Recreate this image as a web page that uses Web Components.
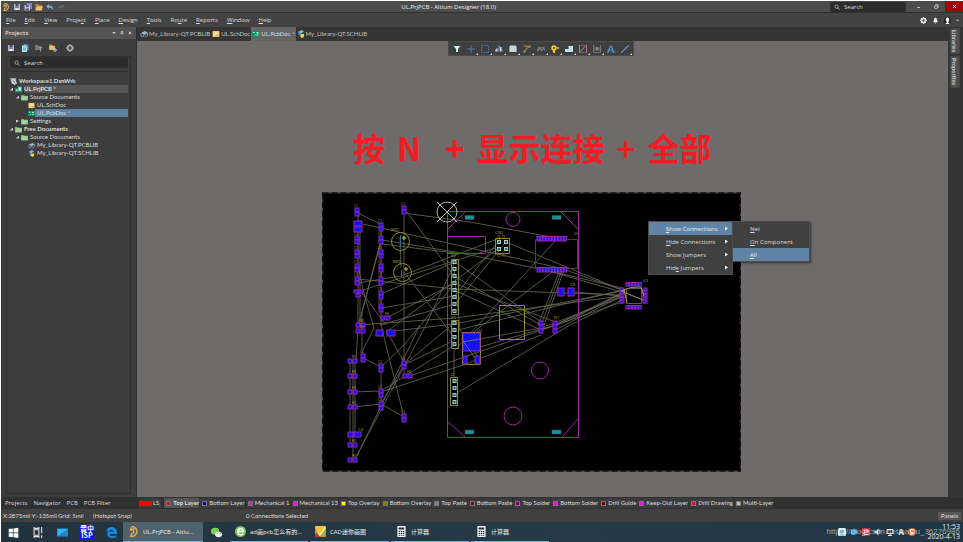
<!DOCTYPE html>
<html lang="en">
<head>
<meta charset="utf-8">
<title>UL.PrjPCB - Altium Designer (18.0)</title>
<style>
html,body{margin:0;height:100%}
body{background:#fff;padding:1px 0 0 1px;box-sizing:border-box;overflow:hidden;
--narrow:Lato,"Open Sans",sans-serif;
font:6px/8px "Open Sans","Noto Sans CJK SC",sans-serif;color:#dedede}
</style>
</head>
<body>
<eda-app></eda-app>
<script>
const define=(name,render)=>customElements.define(name,class extends HTMLElement{
  constructor(){super();this.attachShadow({mode:'open'})}
  connectedCallback(){
    const t=document.createElement('template');
    t.innerHTML='<style>*{box-sizing:border-box}button{font:inherit;color:inherit;background:none;border:0;padding:0;margin:0;white-space:pre}u{text-decoration-thickness:1px;text-underline-offset:1px}</style>'+render(this);
    this.shadowRoot.replaceChildren(t.content.cloneNode(true));
  }
});

const floppy=c=>`<path fill="${c}" d="M2 2h12v12H2z"/><path fill="#4b4b68" d="M5 2h6v5H5zM4 9h8v1H4z"/><path fill="#fff" d="M5 11h6v3H5z"/>`;
const folder='<path fill="#79a875" d="M0 2h7l1 2h8v11H0z"/><path fill="#a5d19b" d="M1 5h14v9H1z"/>';
const yfold='<path fill="#b98b43" d="M1 2h5l1 2h7v10H1z"/><path fill="#edc477" d="M4 7h12l-3 8H1z"/>';
const calc='<path fill="#f3f3f3" d="M2 0h12v16H2z"/><path fill="#26353e" d="M4 2h8v3H4zM4 7h2v2H4zm3 0h2v2H7zm3 0h2v2h-2zM4 10h2v2H4zm3 0h2v2H7zm3 0h2v2h-2zM4 13h2v1H4zm3 0h2v1H7zm3 0h2v1h-2z"/>';
const icons={
altium:'<path fill="none" stroke="#d9ad55" stroke-width="2.2" d="M5 1h3q5 3 5 7t-5 7H4l2-5M4 2v4l4-2v7"/>',
save:floppy('#b7b5dc'),
saveall:'<path fill="#8882c0" d="M5 0h11v12H5z"/><path fill="#bbb9e2" d="M1 4h11v11H1z"/><path fill="#55548a" d="M4 4h5v4H4zM3 11h7v4H3z"/>',
open:yfold,
undo:'<path fill="#76a6d6" d="M6 2v3q8 0 9 9-3-5-9-5v3L0 7z"/>',
redo:'<path fill="#646464" d="M10 2v3q-8 0-9 9 3-5 9-5v3l6-5z"/>',
search:'<circle cx="7" cy="7" r="4.5" fill="none" stroke="#ddd" stroke-width="1.5"/><path stroke="#ddd" stroke-width="1.7" d="m10 10 5 5"/>',
min:'<path fill="#ddd" d="M4 10h9v3H4z"/>',
restore:'<path fill="none" stroke="#ddd" stroke-width="2" d="M5 5V2h9v8h-3M2 6h9v8H2z"/>',
close:'<path stroke="#eee" stroke-width="3" d="m3 3 10 10M13 3 3 13"/>',
gear:'<circle cx="8" cy="8" r="4.5" fill="none" stroke="#eee" stroke-width="3.5"/><path stroke="#eee" stroke-width="2.5" d="M8 0v3M8 13v3M0 8h3M13 8h3M2.5 2.5l2 2M11.5 11.5l2 2M2.5 13.5l2-2M11.5 4.5l2-2"/>',
bell:'<path fill="#eee" d="M2 12q3-3 3-8 3-5 6 0 0 5 3 8zM6 13h4q-2 4-4 0z"/>',
user:'<circle cx="8" cy="8" r="8" fill="#242424"/><ellipse cx="8" cy="6" rx="4" ry="5" fill="#fff"/><path fill="#fff" d="M6 10h4v3l3 3H3l3-3z"/>',
down:'<path fill="#ddd" d="M1 4h14l-7 8z"/>',
pin:'<path stroke="#ddd" stroke-width="2.5" d="M4 2h8M5 2v7M11 2v7M2 9h12M8 9v6"/>',
lib:'<path fill="#9db5cb" d="M2 6 10 2l5 3-7 5z"/><path fill="none" stroke="#8495a6" stroke-width="2" d="M2 6v6l4 2 2-4 7-4v5l-5 3"/>',
sch:'<path fill="#d9ae52" d="M1 2h14v12H1z"/><path fill="#f5dc96" d="M2 3h12v10H2z"/><path stroke="#bd8b3c" d="M8 10h5M8 11.5h5"/>',
pcb:'<path fill="#099261" d="M0 2h16v12H0z"/><path fill="#d9f1dd" d="M9 4h4v3H9zM9 9h4v2H9zM2 4h3v2H2zM5 9h2v2H5z"/>',
slib:'<path fill="#75bce6" d="M2 4 9 0l5 3-7 5z"/><path fill="#f2d737" d="M7 8h7v3q0 5-5 5l-3-4z"/><path fill="#3b78b0" d="m2 4 5 4v4l-5-3z"/>',
docs:'<path fill="#5793bb" d="M5 0h7l3 3v10H5z"/><path fill="#b4dbef" d="M2 3h7l3 3v10H2z"/><path stroke="#4384ad" d="M4 8h6M4 10h6M4 12h6"/>',
gfold:'<path fill="#777" d="M0 2h6l1 2h5v8H0z"/><path fill="#999" d="M8 6h7l-3 4v5h-2v-5z"/>',
yfgear:'<path fill="#b98b43" d="M0 1h6l1 2h5v9H0z"/><path fill="#edc477" d="M1 4h10v7H1z"/><circle cx="12" cy="12" r="2.5" fill="none" stroke="#ccc" stroke-width="2"/>',
dial:'<circle cx="8" cy="8" r="5" fill="none" stroke="#aeb5ba" stroke-width="3"/><path stroke="#aeb5ba" stroke-width="2" d="M8 0v3M8 13v3M0 8h3M13 8h3"/>',
workspace:'<path fill="#8ba5ca" d="M0 0h14v13H4z"/><path fill="#e2edf9" d="m3 4 7-1 6 9-6 4-5-5z"/><path stroke="#345c94" stroke-width="1.5" d="m5 6 7 7M8 5l4 7"/>',
prj:'<path fill="#18966c" d="M0 5h9v10H0zM6 0h10v14H6z"/><path fill="#d7eee4" d="M8 3h6v8H8zM2 8h4v3H2z"/>',
folder,
filter:'<path fill="#c8edf4" d="M1 2h14L10 8v6H6V8z"/>',
plus:'<path stroke="#5d83ba" stroke-width="1.7" d="M8 0v16M0 8h16"/>',
marquee:'<path fill="none" stroke="#607fc5" stroke-width="1.5" stroke-dasharray="3 2" d="M1 1h14v14H1z"/>',
align:'<path fill="#c8dce5" d="M2 7h3v6H2zM10 4h3v9h-3z"/><path fill="#d84d4b" d="M5 6h2v7H5z"/><path fill="#79b6e4" d="M7 1h2v12H7zM0 9h2v4H0zM13 8h2v5h-2z"/>',
chip:'<path fill="#8c9da4" d="M0 3h2v11H0zM14 3h2v11h-2z"/><path fill="#c6d6d8" d="M2 1h12v13H2z"/>',
route:'<path fill="none" stroke="#b18b38" stroke-width="2" d="M1 2h8L5 12H1m8-5 4-4"/><circle cx="13" cy="3" r="2.5" fill="#b18b38"/><circle cx="3" cy="13" r="2.5" fill="#758899"/>',
wave:'<path fill="none" stroke="#9a743e" stroke-width="2" d="M0 13 3 4l4 7 3-7 4 4"/><path fill="none" stroke="#648fba" stroke-width="1.5" d="m2 13 4-9 4 8 4-8 2 9"/>',
via:'<circle cx="6" cy="6" r="5.5" fill="#f1cc20"/><circle cx="6" cy="6" r="2" fill="#57471e"/><path fill="#f1cc20" d="M4 10h4v6H4z"/><path fill="#84bd5d" d="M11 4h5v4h-5z"/>',
poly:'<path fill="#c2e1eb" d="M0 8h7V2h9v12H0z"/>',
rect:'<path fill="none" stroke="#bd6fab" stroke-width="1.8" d="M1 0h14v16H1z"/><path stroke="#c0a052" stroke-width="1.7" d="m3 13 9-10"/>',
dim:'<path fill="none" stroke="#7c8aa0" stroke-width="1.5" d="M1 0v15h14V0M4 4v8m8-8v8M4 8h8"/><path fill="#9e8449" d="M6 4h4v7H6z"/>',
letter:'<path fill="none" stroke="#5a95cf" stroke-width="2.4" d="M2 14 7 2h2l4 12M4 10h7M0 14h5m5 0h6"/>',
line:'<path stroke="#5c95d3" stroke-width="2.3" d="M1 15 15 1"/>',
win:'<path fill="#fff" d="m1 3 6-1v6H1zm7-1 7-1v7H8zM1 9h6v6l-6-1zm7 0h7v7l-7-1z"/>',
task:'<path fill="none" stroke="#e5e5e5" stroke-width="1.5" d="M3 4h7v8H3zM3 0v2h7V0M3 16v-2h7v2M14 0v9m0 3v4"/>',
desktop:'<path fill="#168ad3" d="M0 2h16v12H0z"/><path fill="#36b6f1" d="M1 3h14L1 13z"/>',
edge:'<path fill="#168cdf" d="M0 8q1-8 8-8t8 8v2H5q1 6 10 2v3Q2 19 2 9q1-5 5-5Q2 4 0 8m5-1h6q-1-3-3-3T5 7"/>',
wechat:'<ellipse cx="6" cy="6" rx="6" ry="5" fill="#7dd35a"/><ellipse cx="11" cy="11" rx="5" ry="4" fill="#eee"/><path fill="#315a35" d="M3 4h1v1H3zm5 0h1v1H8zm1 5h1v1H9zm4 0h1v1h-1z"/>',
browser:'<circle cx="8" cy="8" r="8" fill="#79c760"/><path fill="none" stroke="#fff" stroke-width="2" d="M12 11q-4 4-7 0-3-5 2-7 5-1 5 4H4"/>',
cad:'<path fill="#d59828" d="M0 0h16v16H0z"/><path fill="#f0c33a" d="M0 0h16L5 12z"/><path fill="#85b94a" d="M16 0v9L8 16H4z"/><path fill="#c8382e" d="m0 12 4-3 4 7H0z"/><path fill="none" stroke="#f8ed95" stroke-width="2.5" d="m4 9 3 4 8-11"/>',
calc,
bluebox:'<rect width="16" height="16" rx="3" fill="#e8f2fa"/><circle cx="8" cy="7" r="4" fill="#559bc5"/><path fill="#559bc5" d="M3 13h10v2H3z"/>',
drop:'<path fill="#35aaf0" d="M1 7Q6-2 13 4q5 7-4 10Q0 15 1 7"/>',
redbox:'<path fill="#e1222c" d="M0 0h16v16H0z"/><path fill="none" stroke="#fff" stroke-width="2" d="M3 4h9v4H4v5h9"/>',
sound:'<path fill="#ddd" d="M1 6h3l5-5v14l-5-5H1z"/><path fill="none" stroke="#ddd" d="M11 4q4 4 0 8"/>',
net:'<path fill="none" stroke="#eee" stroke-width="2" d="M2 3h12v8H2zM8 11v3M4 15h8"/>',
sogou:'<circle cx="8" cy="8" r="8" fill="#ed5829"/><path fill="none" stroke="#fff" stroke-width="2.2" d="M12 4Q4 1 5 6t5 3q3 4-6 3"/>'
};
define('ui-icon',h=>`<style>:host{display:inline-flex;flex:none;width:var(--icon,8px);height:var(--icon,8px)}svg{width:100%;height:100%}</style><svg viewBox="0 0 16 16" aria-hidden="true">${icons[h.getAttribute('name')]||''}</svg>`);

define('search-box',()=>`<style>:host{display:flex;align-items:center;gap:4px;background:#2b2b2b;border-radius:2px;padding:0 4px;--icon:6px}
input{font:inherit;color:#ddd;background:none;border:0;outline:0;padding:0;min-width:0;width:100%}input::placeholder{color:#ddd;opacity:1}</style><ui-icon name="search"></ui-icon><input aria-label="Search" placeholder="Search">`);

define('title-bar',()=>`<style>:host{display:grid;grid-template-columns:6fr auto 7fr;background:#4c4c4c;height:12px;border-bottom:1px solid #303030;align-items:center}
.l,.r{display:flex;align-items:center}.l{gap:3px;padding-left:1px}.l button,.r button{display:flex;align-items:center;justify-content:center}
.r{justify-content:flex-end;height:11px}search-box{width:76px;height:10px;margin-right:3px}.r button{width:18px;height:11px;--icon:5px}.r .x{background:#9e0808}h1{font:inherit;margin:0;color:#eee}</style>
<div class="l">${['altium','save','saveall','open','undo','redo'].map(n=>`<button aria-label="${n}"><ui-icon name="${n}"></ui-icon></button>`).join('')}</div>
<h1>UL.PrjPCB - Altium Designer (18.0)</h1>
<div class="r"><search-box></search-box><button aria-label="Minimize"><ui-icon name="min"></ui-icon></button><button aria-label="Restore"><ui-icon name="restore"></ui-icon></button><button class="x" aria-label="Close"><ui-icon name="close"></ui-icon></button></div>`);

define('menu-bar',()=>`<style>:host{display:flex;justify-content:space-between;background:#434343;height:14px;align-items:center;padding:0 4px 0 5px}nav,div{display:flex;gap:9px;align-items:center}div{gap:5px;--icon:7px}.d{--icon:3px}button{display:flex}</style>
<nav>${['<u>F</u>ile','<u>E</u>dit','<u>V</u>iew','Proje<u>c</u>t','<u>P</u>lace','<u>D</u>esign','<u>T</u>ools','Ro<u>u</u>te','<u>R</u>eports','<u>W</u>indow','<u>H</u>elp'].map(t=>`<button><span>${t}</span></button>`).join('')}</nav>
<div><button aria-label="Settings"><ui-icon name="gear"></ui-icon></button><button aria-label="Notifications"><ui-icon name="bell"></ui-icon></button><button aria-label="Account"><ui-icon name="user"></ui-icon></button><button class="d" aria-label="Account menu"><ui-icon name="down"></ui-icon></button></div>`);

define('tree-row',h=>`<style>:host{display:flex;align-items:center;height:8px;gap:2px;padding-left:calc(var(--level)*6px);white-space:nowrap;--icon:7px}
:host([strong]){font-weight:700}:host([current]){background:linear-gradient(90deg,transparent 14px,#555 14px)}:host([selected]){background:linear-gradient(90deg,transparent 25px,#5e81a1 25px)}
i{width:3px;height:3px;flex:none}i.open{background:#ddd;clip-path:polygon(100% 0,100% 100%,0 100%)}i.shut{background:#ddd;clip-path:polygon(0 0,100% 50%,0 100%)}</style>
${h.hasAttribute('arrow')?`<i class="${h.getAttribute('arrow')}"></i>`:''}<ui-icon name="${h.getAttribute('icon')}"></ui-icon><slot></slot>`);

define('projects-panel',()=>`<style>:host{display:flex;flex-direction:column;background:#3d3d3d;border-left:1px solid #303030;border-right:1px solid #303030;min-height:0}
header{display:flex;align-items:center;height:12px;background:#545454;padding:0 4px 0 3px;--icon:4px;gap:4px}h2{font:inherit;font-weight:600;margin:0;flex:1}header button{display:flex}
.tools{display:flex;gap:6px;height:17px;align-items:center;padding-left:5px}.tools hr{width:1px;height:8px;border:0;background:#303030;margin:0 -2px}.tools button{display:flex}
.box{flex:1;border:1px solid #2f2f2f;margin:0 5px 3px 4px;padding:0 2px 0 3px}search-box{height:11px}.rule{border-top:1px solid #2f2f2f;margin:3px 0 5px}tree-row{font-family:var(--narrow)}</style>
<header><h2>Projects</h2><button aria-label="Panel menu"><ui-icon name="down"></ui-icon></button><button aria-label="Pin"><ui-icon name="pin"></ui-icon></button><button aria-label="Close"><ui-icon name="close"></ui-icon></button></header>
<div class="tools">${['save','docs','gfold','yfgear'].map(n=>`<button aria-label="${n}"><ui-icon name="${n}"></ui-icon></button>`).join('')}<hr><button aria-label="Options"><ui-icon name="dial"></ui-icon></button></div>
<div class="box"><search-box></search-box><div class="rule"></div>
<tree-row style="--level:0" strong icon="workspace">Workspace1.DsnWrk</tree-row>
<tree-row style="--level:0" strong current arrow="open" icon="prj">UL.PrjPCB *</tree-row>
<tree-row style="--level:1" arrow="open" icon="folder">Source Documents</tree-row>
<tree-row style="--level:3" icon="sch">UL.SchDoc</tree-row>
<tree-row style="--level:3" selected icon="pcb">UL.PcbDoc *</tree-row>
<tree-row style="--level:1" arrow="shut" icon="folder">Settings</tree-row>
<tree-row style="--level:0" strong arrow="open" icon="folder">Free Documents</tree-row>
<tree-row style="--level:1" arrow="open" icon="folder">Source Documents</tree-row>
<tree-row style="--level:3" icon="lib">My_Library-QT.PCBLIB</tree-row>
<tree-row style="--level:3" icon="slib">My_Library-QT.SCHLIB</tree-row></div>`);

define('doc-tab',h=>`<style>:host{display:block}button{height:100%;display:flex;align-items:center;gap:1px;padding:0 1px;color:#c4c4c4}:host([active]) button{background:#656565;color:#ddd}</style><button><ui-icon name="${h.getAttribute('icon')}"></ui-icon><slot></slot></button>`);
define('doc-tabs',()=>`<style>:host{display:flex;background:#353535;height:14px;padding-left:2px;--icon:8px;font-family:var(--narrow)}</style>
<doc-tab icon="lib">My_Library-QT.PCBLIB</doc-tab><doc-tab icon="sch">UL.SchDoc</doc-tab><doc-tab icon="pcb" active>UL.PcbDoc *</doc-tab><doc-tab icon="slib">My_Library-QT.SCHLIB</doc-tab>`);

define('active-bar',()=>`<style>:host{display:flex;background:#3f3f3f;border:1px solid #4d4a4a;height:15px;border-radius:1px;--icon:8px;padding:0 1px}button{width:14px;height:13px;display:flex;align-items:center;justify-content:center;position:relative}
button:not([plain])::after{content:"";position:absolute;right:0;bottom:0;border:1px solid;border-color:transparent #ddd #ddd transparent}</style>
${['filter','plus','marquee','align','chip','route','wave','via','poly','rect','dim','letter','line'].map(n=>`<button ${n=='filter'||n=='letter'?'plain':''} aria-label="${n}"><ui-icon name="${n}"></ui-icon></button>`).join('')}`);

define('pop-menu',()=>`<style>:host{display:block;background:#404040;border:1px solid #4d4d4d;box-shadow:1px 1px 2px #0008}</style><slot></slot>`);
define('pop-item',h=>`<style>:host{display:block}button{display:flex;align-items:center;justify-content:space-between;width:100%;height:13px;padding:0 4px 0 17px}:host([active]) button{background:#5f84a5;color:#eee}i{width:3px;height:4px;background:#eee;clip-path:polygon(0 0,100% 50%,0 100%)}</style><button><span><slot></slot></span>${h.hasAttribute('sub')?'<i></i>':''}</button>`);

function board(){
 const Y='#8f8b35',N='#7d7d66';let s='';
 const L=a=>a.map(p=>`<polyline points="${p}"/>`).join('');
 const pad=(x,y,w,h)=>`<rect x="${x}" y="${y}" width="${w}" height="${h}" fill="#1212f5" stroke="#9426a8" stroke-width="1"/>`;
 s+=`<g fill="none" stroke="${N}" stroke-width=".8" opacity=".85">`+L([
 '358,213 380,224','363,224 470,248 560,268 622,290','404,213 470,222 557,238','407,212 454,276','404,213 404,365',
 '382,240 455,252 545,270 622,288','382,244 455,253','381,242 358,326','381,240 362,312 362,358','358,215 358,325','360,230 360,325','381,227 381,325','400,237 401,268',
 '358,279 455,289 622,295','358,283 401,276 500,238','360,291 495,248','381,294 455,262','381,308 455,296','386,318 455,283','386,332 499,248',
 '359,270 363,290 374,328','360,290 386,325','358,325 455,318 622,296','380,325 455,304 506,242','386,332 454,324 622,291','404,272 454,337',
 '454,276 541,325','455,262 541,322','454,283 555,322','454,290 541,330','454,269 460,330 480,360',
 '463,342 541,328 622,297','463,340 555,270','480,347 555,325 622,295','506,242 622,290','455,350 557,239','410,376 622,302',
 '457,393 570,325 622,300','555,330 622,296','555,325 622,293','545,270 622,292','562,270 541,325','564,270 544,325','560,270 538,325',
 '353,361 353,459','350,361 350,444','355,361 355,434','358,325 356,361','363,358 381,367','363,350 374,328','381,367 404,345 455,283',
 '353,392 381,391 455,345','353,407 381,404 404,417','381,325 396,385 404,417','386,330 404,362 404,376','404,365 455,340','355,459 426,325 455,262','357,456 420,325','381,392 463,365 541,335','381,404 404,365','381,367 381,406',
 '404,365 454,323','501,238 454,297','575,292 622,296','541,330 570,320 622,293','458,330 622,290','454,350 454,378'
 ])+'</g>';
 s+='<g fill="none" stroke="#a321a3"><path d="M447.5 211.5h131v226h-131zM447.5 236.5h38v17h-38M447 230l18-18M561 212l17 17M447 421l18 16M562 437l16-18"/><circle cx="513" cy="219.5" r="7"/><circle cx="540" cy="370.5" r="8.5"/><circle cx="513" cy="416" r="9"/></g>';
 for(const[x,y]of[[465,215.5],[552,215.5],[465,430],[552,430]])s+=`<rect x="${x}" y="${y}" width="9" height="4" fill="#14939a" stroke="#5d4169" stroke-width=".5"/>`;
 const txt=(x,y,t,sz=4)=>`<text x="${x}" y="${y}" font-size="${sz}" fill="#a09c25">${t}</text>`;
 const v=(x,y)=>pad(x-2,y-4,4,4)+pad(x-2,y,4,4)+txt(x-3,y-5,'C1',3);
 const h=(x,y)=>pad(x-5,y-2,4,4)+pad(x,y-2,4,4)+txt(x-1,y-3,'R8',3);
 for(const y of[212,240,254,268,281])s+=v(357,y);
 s+=pad(354,221,8,5)+pad(354,227,8,5)+pad(354,290,4,3)+pad(359,290,4,3)+pad(356,294,4,3);
 for(const y of[227,240,254,268,281,295,308,368,393,406])s+=v(381,y);
 for(const[x,y]of[[404,210],[363,358],[404,365],[404,418]])s+=v(x,y);
 for(const[x,y]of[[353,361],[353,376],[353,392],[353,407],[353,445],[353,460],[408,376],[386,318],[361,325],[361,331]])s+=h(x,y);
 s+=pad(348,432,5,5)+pad(354,432,7,5)+txt(358,431,'C4')+pad(376,330,7,6)+pad(387,330,8,6);
 s+=`<path fill="none" stroke="#4b4722" d="M535.5 239.5h42v29h-42z"/><g fill="none" stroke="${Y}"><circle cx="400.5" cy="241.5" r="9"/><circle cx="402.5" cy="272.5" r="9"/><path d="M451.5 259.5h7v55h-7zM451.5 320.5h7v28h-7zM450.5 377.5h7v28h-7zM495.5 238.5h14v15h-14zM499.5 305.5h25v34h-25zM462.5 332.5h18v32h-18z"/></g>`;
 s+=txt(391,231,'BR2')+txt(393,263,'BR1')+txt(451,257,'P2')+txt(451,319,'P1')+txt(450,376,'J2')+txt(495,234,'CN2')+txt(497,238,'T4 T3',3)+txt(497,257,'T2 T1',3)+txt(574,235,'U3',3)+txt(570,286,'C9')+txt(554,319,'R7')+txt(477,332,'U2')+txt(643,282,'U1');
 s+='<path stroke="#2c6f8d" d="M400.5 235v11m1 24v8"/><path stroke="#d0cd20" d="M402 238h4m-2-2v4m0 29h4m-2-2v4"/>';
 const pin=(x,y)=>`<rect x="${x-2}" y="${y-2}" width="4" height="4" fill="#c4cec4"/><circle cx="${x}" cy="${y}" r="1.3" fill="#08747b"/>`;
 for(const y of[262,269,276,283,290,297,304,311,323,330,337,344,381,388,395,402])s+=pin(454.5,y);
 for(const x of[499,506])for(const y of[242,249])s+=pin(x,y);
 for(let x=537;x<566;x+=3)s+=pad(x,236.5,2.4,4.5)+pad(x,267.5,2.4,4.5);
 s+=pad(558,288,6,8)+pad(568,288,6,8);
 for(const x of[539,553])for(const y of[321,325,329])s+=pad(x,y,4,4);
 s+=pad(463,333,17,18)+pad(463,356,4,8)+pad(475,356,5,8);
 s+=`<path fill="none" stroke="${N}" stroke-width=".8" d="m461 338 14 20M463 342l17-3"/>`;
 for(let i=0;i<5;i++)s+=pad(626+i*3.2,282.5,2.4,3.5)+pad(626+i*3.2,305.5,2.4,3.5)+pad(620,288+i*3.2,4,2.4)+pad(643,288+i*3.2,4,2.4);
 s+=`<path fill="none" stroke="#5f5b2a" d="M626.5 288.5h15v15h-15z"/><path fill="none" stroke="#9b965b" d="m643 300-22-9q9-5 20-4l3 9m-20-7 3 14"/>`;
 s+='<g fill="none" stroke="#b5b5b5"><circle cx="447" cy="212" r="10"/><path d="m437 202 20 20m0-20-20 20"/></g>';
 return s;
}
define('pcb-board',()=>`<style>:host{display:block}svg{display:block;width:100%;font-family:"Liberation Sans",sans-serif}</style><svg viewBox="322 192 419 280" role="img" aria-label="PCB layout"><path fill="#000" stroke="#3d3b3b" stroke-width="1" d="M322.5 193h418v278h-418z"/><path fill="none" stroke="#131313" stroke-width="1.5" stroke-dasharray="6 3" d="M322.5 193h418v278h-418z"/>${board()}</svg>`);

define('work-area',()=>`<style>:host{display:block;position:relative;background:#6f6b6a;min-height:0;overflow:hidden}
active-bar{position:absolute;left:311px;top:0}h2{position:absolute;left:216px;top:86px;margin:0;display:flex;gap:12px;align-items:center;font:700 32px/40px "Noto Sans CJK SC",sans-serif;color:#f01d24;white-space:nowrap}h2 b{padding-left:12px}
pcb-board{position:absolute;left:185px;top:151px;width:419px}.m1{position:absolute;left:511px;top:180px;width:85px}.m2{position:absolute;left:595px;top:180px;width:78px}</style>
<active-bar></active-bar><h2><span>按</span><span>N</span><b>+</b><span>显示连接</span><span>+</span><span>全部</span></h2><pcb-board></pcb-board>
<pop-menu class="m1"><pop-item sub active><u>S</u>how Connections</pop-item><pop-item sub><u>H</u>ide Connections</pop-item><pop-item sub>Show <u>J</u>umpers</pop-item><pop-item sub>Hid<u>e</u> Jumpers</pop-item></pop-menu>
<pop-menu class="m2"><pop-item><u>N</u>et</pop-item><pop-item><u>O</u>n Component</pop-item><pop-item active><u>A</u>ll</pop-item></pop-menu>`);

define('side-bar',()=>`<style>:host{display:flex;flex-direction:column;gap:2px;background:#353535;padding:1px 3px 0 2px;align-items:stretch;font-family:var(--narrow)}button{writing-mode:vertical-rl;background:#505050;padding:1px;line-height:8px;border:1px solid #454545;color:#eee}</style><button>Libraries</button><button>Properties</button>`);

define('layer-tab',h=>`<style>:host{display:block}button{height:10px;display:flex;align-items:center;gap:2px;padding:0 0 0 2px;background:#3b3b3b}:host([active]) button{background:#555;font-weight:700}i{width:5px;height:5px;border:1px solid #777;background:${h.getAttribute('color')}}:host([set]) i{width:13px;border:0}:host([set]) button{gap:1px;padding:0 2px 0 0}</style><button><i></i><slot></slot></button>`);
define('layer-bar',()=>`<style>:host{display:flex;background:#303030;align-items:center;height:12px}.p{display:flex;width:136px;gap:6px;padding-left:4px;align-items:center;flex:none}.l{display:flex;gap:1px;padding-left:2px;white-space:nowrap;font-family:var(--narrow)}layer-tab[set]{margin-right:2px}</style>
<div class="p"><button>Projects</button><button>Navigator</button><button>PCB</button><button>PCB Filter</button></div><div class="l"><layer-tab set color="red">LS</layer-tab>
${[['Top Layer','red'],['Bottom Layer','#00f'],['Mechanical 1','#f0f'],['Mechanical 13','#f0f'],['Top Overlay','#ff0'],['Bottom Overlay','#808000'],['Top Paste','#808080'],['Bottom Paste','#800000'],['Top Solder','#800080'],['Bottom Solder','#f0f'],['Drill Guide','#800000'],['Keep-Out Layer','#f0f'],['Drill Drawing','#ff002a'],['Multi-Layer','#c0c0c0']].map((a,i)=>`<layer-tab ${i?'':'active'} color="${a[1]}">${a[0]}</layer-tab>`).join('')}</div>`);
define('status-bar',()=>`<style>:host{display:grid;grid-template-columns:55px 35px 153px 1fr auto;background:#404040;height:13px;align-items:center;padding:0 2px;font-family:var(--narrow)}span{white-space:nowrap}button{background:#575757;padding:0 3px;height:8px}</style><span>X:2875mil Y:-135mil</span><span>Grid: 5mil</span><span>(Hotspot Snap)</span><span>0 Connections Selected</span><button>Panels</button>`);

define('task-button',h=>`<style>:host{display:block;height:100%;width:var(--w,24px)}button{display:flex;align-items:center;justify-content:center;gap:4px;width:100%;height:100%;--icon:11px}:host([open]) button{justify-content:flex-start;padding-left:5px;border-bottom:1px solid #75b5e2}:host([active]) button{background:#50626d}b{font:700 7px/7px "Noto Sans CJK SC",sans-serif;background:#0b15e8;color:#fff}</style><button aria-label="${h.getAttribute('label')||h.textContent}">${h.hasAttribute('isp')?'<b>晋中<br>ISP</b>':`<ui-icon name="${h.getAttribute('icon')}"></ui-icon>`}<slot></slot></button>`);
define('task-bar',()=>`<style>:host{display:flex;position:relative;background:linear-gradient(90deg,#22333e,#273b46 60%,#203642);height:20px;align-items:center;color:#eee}.tray{margin-left:auto;display:flex;align-items:center;gap:4px;padding-right:3px;--icon:8px}.tray b{font:700 8px/8px "Open Sans",sans-serif}time{width:40px;text-align:right;font-size:7px;line-height:10px}.wm{position:absolute;right:3px;bottom:5px;font:8px/10px "Liberation Sans",sans-serif;color:#d0d4d8bb}.g{display:flex;gap:2px;height:100%}</style>
<task-button label="Start" icon="win"></task-button><task-button label="Task View" icon="task"></task-button><task-button style="--w:26px" label="Desktop" icon="desktop"></task-button><task-button isp label="ISP"></task-button><task-button label="Edge" icon="edge"></task-button>
<div class="g"><task-button style="--w:80px" open active icon="altium">UL.PrjPCB - Altiu...</task-button><task-button style="--w:23px" icon="wechat" label="WeChat"></task-button><task-button style="--w:78px" open icon="browser">ad画pcb怎么有的...</task-button><task-button style="--w:79px" open icon="cad">CAD迷你画图</task-button><task-button style="--w:78px" open icon="calc">计算器</task-button><task-button style="--w:78px" open icon="calc">计算器</task-button></div>
<div class="tray"><ui-icon name="bluebox"></ui-icon><ui-icon name="drop"></ui-icon><ui-icon name="redbox"></ui-icon><ui-icon name="sound"></ui-icon><ui-icon name="net"></ui-icon><b>A</b><ui-icon name="sogou"></ui-icon><time>11:53<br>2020-4-13</time></div><span class="wm">https://blog.csdn.net/baidu_36276986</span>`);

define('eda-app',()=>`<style>:host{display:grid;height:100%;grid-template-rows:auto auto minmax(0,1fr) auto auto auto}.main{display:grid;grid-template-columns:136px minmax(0,1fr) 15px;min-height:0}.mid{display:grid;grid-template-rows:auto minmax(0,1fr);min-height:0}</style>
<title-bar></title-bar><menu-bar></menu-bar><div class="main"><projects-panel></projects-panel><div class="mid"><doc-tabs></doc-tabs><work-area></work-area></div><side-bar></side-bar></div><layer-bar></layer-bar><status-bar></status-bar><task-bar></task-bar>`);
</script>
</body>
</html>
